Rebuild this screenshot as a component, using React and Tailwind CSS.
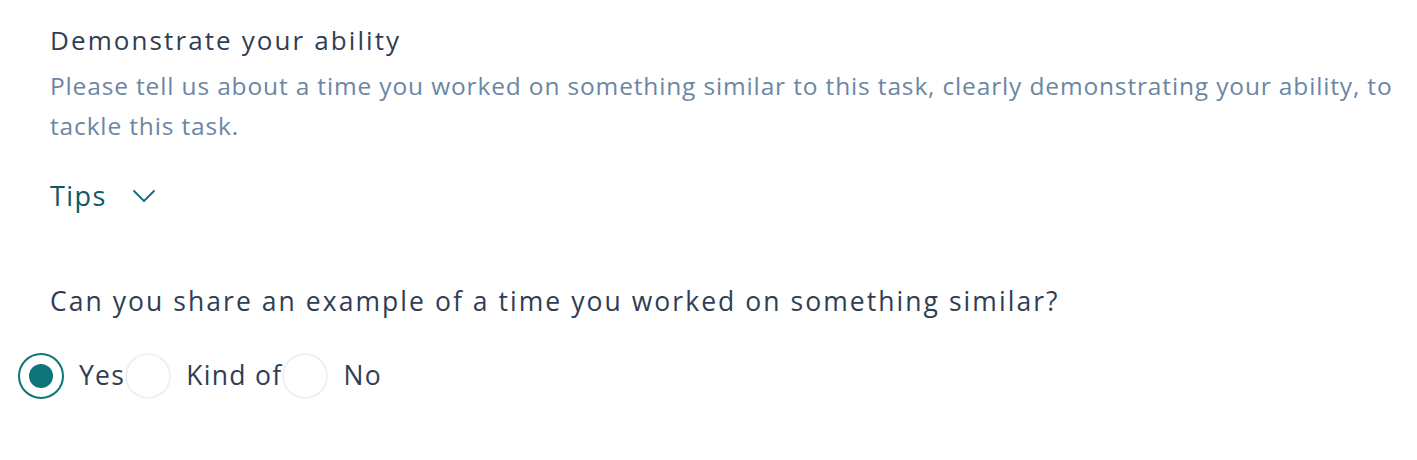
import { useState } from 'react';

const opts = ['Yes', 'Kind of', 'No'];

export default function App() {
  const [val, setVal] = useState('Yes');
  const [open, setOpen] = useState(false);
  return (
    <div className="min-h-[460px] bg-white pl-[50px] pr-[18px] pt-[22px] font-['Open_Sans',sans-serif]">
      <h2 className="text-[26px] leading-[36px] tracking-[2.1px] text-[#2f3e55]">Demonstrate your ability</h2>
      <p className="mt-[8px] text-[24.5px] leading-[40px] tracking-[0.85px] text-[#6c86a3]">
        Please tell us about a time you worked on something similar to this task, clearly demonstrating your ability, to tackle this task.
      </p>
      <button onClick={() => setOpen(o => !o)} className="mt-[30px] flex items-center gap-[26px] text-[27px] leading-[40px] tracking-[1.4px] text-[#0b5a68]">
        Tips
        <svg width="22" height="12" viewBox="0 0 22 12" fill="none" stroke="#0e6f7a" strokeWidth="1.8" strokeLinecap="round" strokeLinejoin="round">
          <path d="M1 1l10 10L21 1" />
        </svg>
      </button>
      <div className="mt-[65px] text-[26.5px] leading-[40px] tracking-[2.05px] text-[#2f3e55]">
        Can you share an example of a time you worked on something similar?
      </div>
      <div className="-ml-[32px] mt-[32px] flex items-center">
        {opts.map(o => (
          <label key={o} className="flex cursor-pointer items-center gap-[15px]" onClick={() => setVal(o)}>
            <span className={`flex h-[46px] w-[46px] items-center justify-center rounded-full border-2 ${val === o ? 'border-[#0f7479]' : 'border-[#eef0f3]'}`}>
              {val === o && <span className="h-[24px] w-[24px] rounded-full bg-[#0f7479]" />}
            </span>
            <span className="text-[26.5px] tracking-[1.3px] text-[#2f3e55]">{o}</span>
          </label>
        ))}
      </div>
    </div>
  );
}
